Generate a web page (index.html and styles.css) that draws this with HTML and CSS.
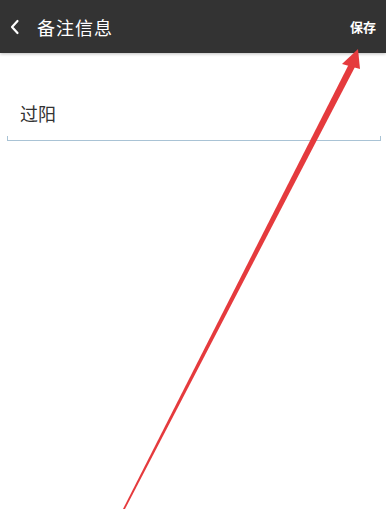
FILE: index.html
```html
<!doctype html>
<html>
  <head>
    <title>备注信息</title>
    <link rel="stylesheet" href="styles.css">
  </head>
  <body>
    <header class="topbar">
      <div class="topbar-left">
        <svg class="back-icon" width="12" height="16" viewBox="0 0 12 16">
          <path d="M8.5 2 L3 8 L8.5 14" fill="none" stroke="#fff" stroke-width="2.2" stroke-linecap="round" stroke-linejoin="round"/>
        </svg>
        <span class="title">备注信息</span>
      </div>
      <span class="save">保存</span>
    </header>

    <main class="content">
      <div class="field">
        <div class="field-value">过阳</div>
        <div class="field-line"></div>
      </div>
    </main>

    <!-- annotation arrow pointing at save -->
    <svg class="arrow" width="386" height="529" viewBox="0 0 386 529">
      <polygon points="123,509 350,62 356,65 125,509" fill="#e53a3d"/>
      <polygon points="358,49 342,64 360,69" fill="#e53a3d"/>
    </svg>
  </body>
</html>
```

FILE: styles.css
```css
body {
    margin: 0;
    width: 386px;
    height: 529px;
    background: #fff;
    font-family: "Noto Sans CJK SC", "Noto Sans", sans-serif;
    overflow: hidden;
    position: relative;
}

.topbar {
    height: 53px;
    background: #333333;
    display: flex;
    align-items: center;
    justify-content: space-between;
    padding: 0 10px 0 9px;
    box-shadow: 0 1px 3px rgba(0,0,0,0.25);
}

.topbar-left {
    display: flex;
    align-items: center;
}

.back-icon {
    margin-right: 16px;
}

.title {
    color: #fff;
    font-size: 18px;
    letter-spacing: 1px;
}

.save {
    color: #fff;
    font-size: 13px;
    font-weight: bold;
}

.content {
    padding: 47px 5px 0 7px;
}

.field-value {
    font-size: 18px;
    color: #333;
    padding-left: 13px;
    line-height: 26px;
}

.field-line {
    margin-top: 10px;
    height: 4px;
    border: 1px solid #a9c3d5;
    border-top: none;
}

.arrow {
    position: absolute;
    left: 0;
    top: 0;
}
```
